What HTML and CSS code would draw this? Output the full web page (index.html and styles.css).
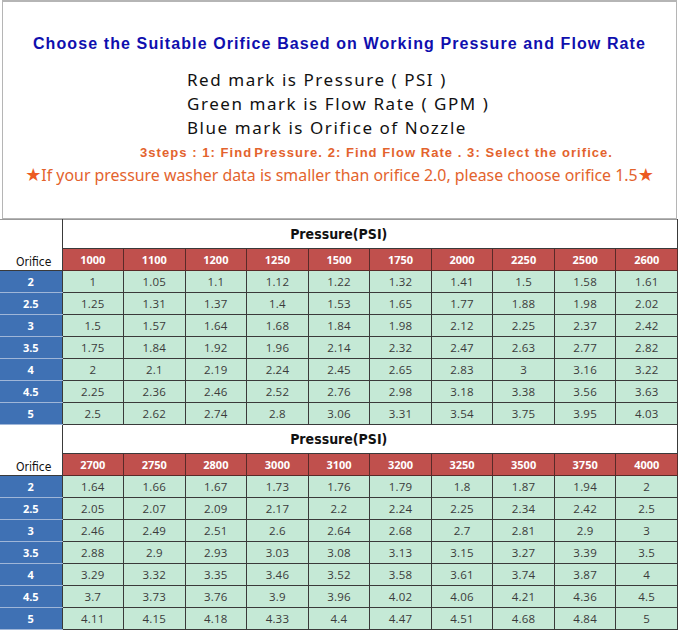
FILE: index.html
```html
<!DOCTYPE html>
<html>
<head>
<meta charset="utf-8">
<link rel="stylesheet" href="styles.css">
</head>
<body>
<div class="top">
  <h1 class="title">Choose the Suitable Orifice Based on Working Pressure and Flow Rate</h1>
  <div class="marks">
    <p>Red mark is Pressure ( PSI )</p>
    <p>Green mark is Flow Rate ( GPM )</p>
    <p>Blue mark is Orifice of Nozzle</p>
  </div>
  <p class="steps">3steps : 1: Find&#8202;Pressure. 2: Find Flow Rate . 3: Select the orifice.</p>
  <p class="note"><span class="star">★</span>If your pressure washer data is smaller than orifice 2.0, please choose orifice 1.5<span class="star">★</span></p>
</div>

<table class="grid">
  <colgroup><col class="c0"><col span="10"></colgroup>
  <tr class="hrow"><td class="orih" rowspan="2">Orifice</td><td class="psi" colspan="10">Pressure(PSI)</td></tr>
  <tr class="prow"><th>1000</th><th>1100</th><th>1200</th><th>1250</th><th>1500</th><th>1750</th><th>2000</th><th>2250</th><th>2500</th><th>2600</th></tr>
  <tr><th class="ori">2</th><td>1</td><td>1.05</td><td>1.1</td><td>1.12</td><td>1.22</td><td>1.32</td><td>1.41</td><td>1.5</td><td>1.58</td><td>1.61</td></tr>
  <tr><th class="ori">2.5</th><td>1.25</td><td>1.31</td><td>1.37</td><td>1.4</td><td>1.53</td><td>1.65</td><td>1.77</td><td>1.88</td><td>1.98</td><td>2.02</td></tr>
  <tr><th class="ori">3</th><td>1.5</td><td>1.57</td><td>1.64</td><td>1.68</td><td>1.84</td><td>1.98</td><td>2.12</td><td>2.25</td><td>2.37</td><td>2.42</td></tr>
  <tr><th class="ori">3.5</th><td>1.75</td><td>1.84</td><td>1.92</td><td>1.96</td><td>2.14</td><td>2.32</td><td>2.47</td><td>2.63</td><td>2.77</td><td>2.82</td></tr>
  <tr><th class="ori">4</th><td>2</td><td>2.1</td><td>2.19</td><td>2.24</td><td>2.45</td><td>2.65</td><td>2.83</td><td>3</td><td>3.16</td><td>3.22</td></tr>
  <tr><th class="ori">4.5</th><td>2.25</td><td>2.36</td><td>2.46</td><td>2.52</td><td>2.76</td><td>2.98</td><td>3.18</td><td>3.38</td><td>3.56</td><td>3.63</td></tr>
  <tr><th class="ori">5</th><td>2.5</td><td>2.62</td><td>2.74</td><td>2.8</td><td>3.06</td><td>3.31</td><td>3.54</td><td>3.75</td><td>3.95</td><td>4.03</td></tr>

  <tr class="hrow"><td class="orih" rowspan="2">Orifice</td><td class="psi" colspan="10">Pressure(PSI)</td></tr>
  <tr class="prow"><th>2700</th><th>2750</th><th>2800</th><th>3000</th><th>3100</th><th>3200</th><th>3250</th><th>3500</th><th>3750</th><th>4000</th></tr>
  <tr><th class="ori">2</th><td>1.64</td><td>1.66</td><td>1.67</td><td>1.73</td><td>1.76</td><td>1.79</td><td>1.8</td><td>1.87</td><td>1.94</td><td>2</td></tr>
  <tr><th class="ori">2.5</th><td>2.05</td><td>2.07</td><td>2.09</td><td>2.17</td><td>2.2</td><td>2.24</td><td>2.25</td><td>2.34</td><td>2.42</td><td>2.5</td></tr>
  <tr><th class="ori">3</th><td>2.46</td><td>2.49</td><td>2.51</td><td>2.6</td><td>2.64</td><td>2.68</td><td>2.7</td><td>2.81</td><td>2.9</td><td>3</td></tr>
  <tr><th class="ori">3.5</th><td>2.88</td><td>2.9</td><td>2.93</td><td>3.03</td><td>3.08</td><td>3.13</td><td>3.15</td><td>3.27</td><td>3.39</td><td>3.5</td></tr>
  <tr><th class="ori">4</th><td>3.29</td><td>3.32</td><td>3.35</td><td>3.46</td><td>3.52</td><td>3.58</td><td>3.61</td><td>3.74</td><td>3.87</td><td>4</td></tr>
  <tr><th class="ori">4.5</th><td>3.7</td><td>3.73</td><td>3.76</td><td>3.9</td><td>3.96</td><td>4.02</td><td>4.06</td><td>4.21</td><td>4.36</td><td>4.5</td></tr>
  <tr><th class="ori">5</th><td>4.11</td><td>4.15</td><td>4.18</td><td>4.33</td><td>4.4</td><td>4.47</td><td>4.51</td><td>4.68</td><td>4.84</td><td>5</td></tr>
</table>
</body>
</html>
```

FILE: styles.css
```css
html, body {
  margin: 0;
  padding: 0;
  background: #ffffff;
}

body {
  width: 679px;
  height: 632px;
  overflow: hidden;
}

.top {
  box-sizing: border-box;
  margin-left: 2px;
  width: 675px;
  height: 219px;
  border: 1px solid #b5b5b5;
  border-top-width: 2px;
  display: flex;
  flex-direction: column;
  align-items: center;
  padding-top: 33px;
}

.title {
  margin: 0;
  font-family: "Liberation Sans", Arial, sans-serif;
  font-weight: bold;
  font-size: 16px;
  line-height: 18px;
  color: #0f0fae;
  letter-spacing: 1.1px;
  white-space: nowrap;
}

.marks {
  margin-top: 15px;
  align-self: flex-start;
  margin-left: 184px;
}

.marks p {
  margin: 0;
  font-family: "Noto Sans", sans-serif;
  font-size: 17px;
  line-height: 24px;
  color: #111111;
  letter-spacing: 1.55px;
}

.steps {
  margin: 5px 0 0 0;
  align-self: flex-start;
  margin-left: 137px;
  font-family: "Liberation Sans", Arial, sans-serif;
  font-weight: bold;
  font-size: 13px;
  line-height: 16px;
  color: #e3632d;
  letter-spacing: 1.05px;
  white-space: nowrap;
}

.note {
  margin: 3px 0 0 0;
  font-family: "Noto Sans", sans-serif;
  font-size: 15.9px;
  line-height: 22px;
  color: #e3632d;
  white-space: nowrap;
}

.star {
  font-family: "DejaVu Sans", sans-serif;
  font-size: 18px;
  color: #ec5a22;
}

.grid {
  border-collapse: collapse;
  table-layout: fixed;
  width: 678px;
  margin: 0;
}

.grid col.c0 {
  width: 62px;
}

.grid td,
.grid th {
  padding: 0;
  text-align: center;
  border: 1px solid #3a3a3a;
  height: 21px;
}

.grid td {
  background: #c5e9d6;
  font-family: "Open Sans", "Noto Sans", sans-serif;
  font-size: 11.5px;
  color: #3b3b3b;
  letter-spacing: 0.2px;
}

.grid th {
  font-family: "Open Sans", "Noto Sans", sans-serif;
  font-weight: bold;
  font-size: 11px;
  color: #ffffff;
}

.grid .prow th {
  background: #c0504d;
  border-color: #5a2a28;
  height: 21px;
}

.grid th.ori {
  background: #3f71b4;
  border-color: #9fb6d8;
  border-right-color: #3a3a3a;
  border-left: none;
}

.grid .hrow td {
  background: #ffffff;
  height: 28px;
}

.grid td.orih {
  border-left: none;
  border-top: 1px solid #9a9a9a;
  vertical-align: bottom;
  padding-bottom: 1px;
  padding-left: 6px;
  font-family: "Liberation Sans Narrow", "DejaVu Sans Condensed", "Roboto Condensed", "Liberation Sans", sans-serif;
  font-stretch: condensed;
  font-size: 12px;
  color: #111111;
  letter-spacing: 0;
}

.grid td.psi {
  font-family: "Liberation Sans Narrow", "DejaVu Sans Condensed", "Roboto Condensed", "Liberation Sans", sans-serif;
  font-stretch: condensed;
  font-weight: bold;
  font-size: 14px;
  color: #111111;
  border-top: 1px solid #9a9a9a;
  letter-spacing: 0;
  padding-right: 62px;
}
```
